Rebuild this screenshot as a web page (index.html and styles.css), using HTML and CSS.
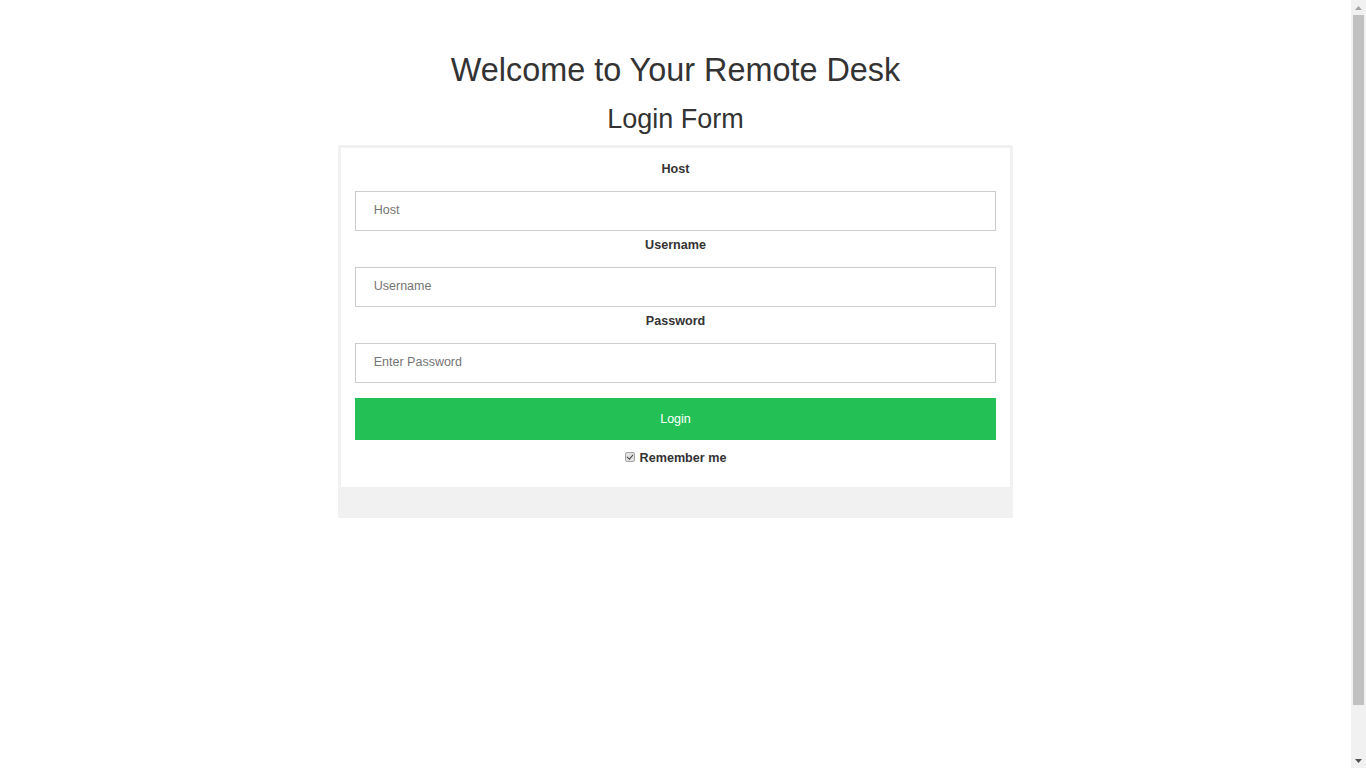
FILE: index.html
```html
<!DOCTYPE html>
<html lang="en">
<head>
<meta charset="utf-8">
<title>Remote Desk Login</title>
<link rel="stylesheet" href="styles.css">
</head>
<body>
  <div class="page">
    <h1 class="title">Welcome to Your Remote Desk</h1>
    <h2 class="subtitle">Login Form</h2>
    <form class="login-form">
      <div class="fields">
        <label class="field-label" for="host">Host</label>
        <input class="field-input" id="host" type="text" placeholder="Host">
        <label class="field-label" for="username">Username</label>
        <input class="field-input" id="username" type="text" placeholder="Username">
        <label class="field-label" for="password">Password</label>
        <input class="field-input field-last" id="password" type="password" placeholder="Enter Password">
        <button class="login-btn" type="button">Login</button>
        <label class="remember">
          <input class="remember-box" type="checkbox" checked>
          <span>Remember me</span>
        </label>
      </div>
      <div class="form-footer"></div>
    </form>
  </div>
  <div class="scrollbar" aria-hidden="true">
    <div class="sb-btn">
      <svg width="7" height="4" viewBox="0 0 7 4"><polygon points="0,4 7,4 3.5,0" fill="#a3a3a3"/></svg>
    </div>
    <div class="sb-track"><div class="sb-thumb"></div></div>
    <div class="sb-btn">
      <svg width="7" height="4" viewBox="0 0 7 4"><polygon points="0,0 7,0 3.5,4" fill="#505050"/></svg>
    </div>
  </div>
</body>
</html>
```

FILE: styles.css
```css
html, body {
  margin: 0;
  padding: 0;
}

body {
  font-family: "Liberation Sans", Arial, sans-serif;
  color: #333;
  background: #fff;
}

.page {
  width: calc(100% - 15px);
  padding-top: 52px;
  box-sizing: border-box;
}

.title {
  margin: 0;
  font-size: 32.4px;
  line-height: 36px;
  font-weight: normal;
  text-align: center;
}

.subtitle {
  margin: 16px 0 11px;
  font-size: 27px;
  line-height: 30px;
  font-weight: normal;
  text-align: center;
}

.login-form {
  width: 50%;
  margin: 0 auto;
  border: 3px solid #f1f1f1;
  box-sizing: border-box;
  display: flex;
  flex-direction: column;
}

.fields {
  display: flex;
  flex-direction: column;
  padding: 11px 14px 19px;
  background: #fff;
}

.field-label {
  font-size: 12.6px;
  font-weight: bold;
  line-height: 20px;
  text-align: center;
  margin-bottom: 12px;
}

.field-input {
  height: 40px;
  box-sizing: border-box;
  border: 1px solid #ccc;
  padding: 0 18px 3px;
  margin: 0 0 4px;
  font-family: "Liberation Sans", Arial, sans-serif;
  font-size: 12.5px;
  color: #333;
  outline: none;
}

.field-input::placeholder {
  color: #757575;
}

.field-last {
  margin-bottom: 15px;
}

.login-btn {
  height: 42px;
  border: none;
  margin: 0;
  background: #23c155;
  color: #fff;
  font-family: "Liberation Sans", Arial, sans-serif;
  font-size: 12.5px;
  cursor: pointer;
}

.remember {
  display: flex;
  align-items: center;
  justify-content: center;
  gap: 4px;
  margin-top: 8px;
  font-size: 12.6px;
  font-weight: bold;
  line-height: 20px;
}

.remember-box {
  appearance: none;
  -webkit-appearance: none;
  width: 10px;
  height: 10px;
  margin: 0 1px 3px 0;
  border: 1px solid #a5a5a5;
  border-radius: 2px;
  background: #e2e2e2;
  position: relative;
  box-sizing: border-box;
}

.remember-box::after {
  content: "";
  position: absolute;
  left: 2.5px;
  top: 0;
  width: 2.5px;
  height: 5px;
  border: solid #444;
  border-width: 0 1.5px 1.5px 0;
  transform: rotate(40deg);
}

.form-footer {
  height: 28px;
  background: #f1f1f1;
}

.scrollbar {
  position: fixed;
  top: 0;
  right: 0;
  width: 15px;
  height: 100vh;
  background: #f1f1f1;
  display: flex;
  flex-direction: column;
}

.sb-btn {
  height: 15px;
  flex: none;
  display: flex;
  align-items: center;
  justify-content: center;
}

.sb-track {
  flex: 1;
  display: flex;
  flex-direction: column;
}

.sb-thumb {
  height: 690px;
  margin: 0 2px;
  background: #c1c1c1;
}
```
